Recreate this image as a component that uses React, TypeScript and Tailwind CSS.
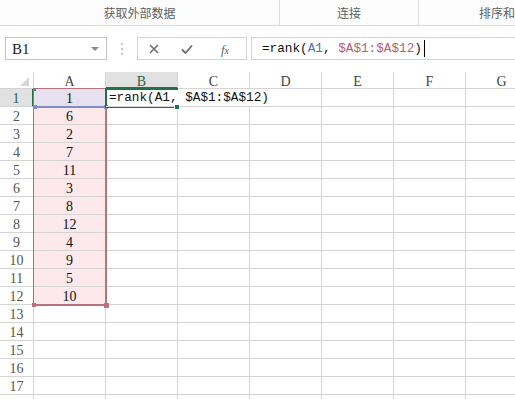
import React from 'react';

const mono = { fontFamily: '"Liberation Mono", "DejaVu Sans Mono", monospace' };
const serif = { fontFamily: '"Liberation Serif", "DejaVu Serif", serif' };
const cols = ['A', 'B', 'C', 'D', 'E', 'F', 'G'];
const values = [1, 6, 2, 7, 11, 3, 8, 12, 4, 9, 5, 10];
const rowCount = 18;

const FormulaText: React.FC<{ colored?: boolean }> = ({ colored }) => (
  <span className="whitespace-pre">
    =rank(
    <span className={colored ? 'text-[#4f6fa8]' : ''}>A1</span>
    {', '}
    <span className={colored ? 'text-[#b8606e]' : ''}>$A$1:$A$12</span>)
  </span>
);

const Ribbon: React.FC = () => (
  <div
    className="flex h-[26px] overflow-hidden border-b border-[#dadada] bg-[#fcfcfc] text-[12px] text-[#5f5f5f]"
    style={{ fontFamily: '"Noto Sans CJK SC", "Noto Sans", sans-serif' }}
  >
    <div className="flex w-[280px] shrink-0 items-center justify-center border-r border-[#e0e0e0]">获取外部数据</div>
    <div className="flex w-[139px] shrink-0 items-center justify-center border-r border-[#e0e0e0]">连接</div>
    <div className="flex min-w-0 flex-1 items-center overflow-hidden whitespace-nowrap pl-[60px]">排序和筛选</div>
  </div>
);

const FormulaBar: React.FC = () => (
  <div className="mt-[11px] flex h-[23px] items-stretch pl-[5px]">
    <div className="flex w-[102px] shrink-0 items-center justify-between border border-[#c6c6c6] bg-white pl-[6px] pr-[7px]">
      <span className="pt-[1px] text-[15px] text-[#222]" style={serif}>B1</span>
      <span className="h-0 w-0 border-x-[4px] border-t-[4px] border-x-transparent border-t-[#8a8a8a]" />
    </div>
    <div className="flex w-[30px] shrink-0 flex-col items-center justify-center gap-[3px]">
      <span className="h-[2px] w-[2px] bg-[#c8c8c8]" />
      <span className="h-[2px] w-[2px] bg-[#c8c8c8]" />
      <span className="h-[2px] w-[2px] bg-[#c8c8c8]" />
    </div>
    <div className="flex w-[110px] shrink-0 items-center border border-[#d4d4d4] bg-white">
      <div className="flex w-[30px] justify-center pl-[2px]">
        <svg width="10" height="10" viewBox="0 0 10 10">
          <path d="M1 1 L9 9 M9 1 L1 9" stroke="#6f6f6f" strokeWidth="1.6" />
        </svg>
      </div>
      <div className="flex w-[38px] justify-center">
        <svg width="12" height="10" viewBox="0 0 12 10">
          <path d="M1 5.5 L4.5 9 L11 1.5" stroke="#6f6f6f" strokeWidth="1.8" fill="none" />
        </svg>
      </div>
      <div className="flex w-[38px] justify-center">
        <span className="italic text-[#666]" style={serif}>
          <span className="text-[13px]">f</span>
          <span className="text-[10px]">x</span>
        </span>
      </div>
    </div>
    <div className="ml-[4px] flex min-w-0 flex-1 items-center border border-r-0 border-[#d4d4d4] bg-white pl-[10px]">
      <span className="text-[12.7px] text-[#111]" style={mono}>
        <FormulaText colored />
      </span>
      <span className="ml-[2px] h-[17px] w-px bg-black" />
    </div>
  </div>
);

const Sheet: React.FC = () => (
  <div className="relative mt-[12px] overflow-hidden">
    <div className="grid grid-cols-[34px_repeat(7,72px)] text-[14px]" style={serif}>
      {/* header row */}
      <div className="relative h-[17px] border-b border-r border-[#d4d4d4] bg-white">
        <svg className="absolute bottom-[2px] right-[4px]" width="9" height="9" viewBox="0 0 9 9">
          <path d="M9 0 L9 9 L0 9 Z" fill="#d6d6d6" />
        </svg>
      </div>
      {cols.map((c) =>
        c === 'B' ? (
          <div
            key={c}
            className="flex h-[17px] items-center justify-center border-b-2 border-r border-b-[#217346] border-r-[#d4d4d4] bg-[#e1e1e1] pt-[3px] text-[#2f5f44]"
          >
            {c}
          </div>
        ) : (
          <div
            key={c}
            className="flex h-[17px] items-center justify-center border-b border-r border-[#d4d4d4] bg-white pt-[3px] text-[#444]"
          >
            {c}
          </div>
        )
      )}

      {Array.from({ length: rowCount }, (_, i) => {
        const r = i + 1;
        const isFirst = r === 1;
        return (
          <React.Fragment key={r}>
            <div
              className={
                isFirst
                  ? 'flex h-[18px] items-center justify-center border-b border-r-2 border-b-[#d4d4d4] border-r-[#217346] bg-[#e1e1e1] pt-[2px] text-[#2f5f44]'
                  : 'flex h-[18px] items-center justify-center border-b border-r border-[#d4d4d4] bg-white pt-[2px] text-[#555]'
              }
            >
              {r < rowCount ? r : ''}
            </div>
            <div
              className={`flex h-[18px] items-center justify-center border-b border-r border-[#d4d4d4] pt-[2px] text-[#111] ${
                isFirst ? 'bg-[#e7e0ee]' : r <= 12 ? 'bg-[#fde8eb]' : 'bg-white'
              }`}
            >
              {r <= 12 ? values[i] : ''}
            </div>
            {isFirst ? (
              <div
                className="relative z-10 col-span-3 flex h-[18px] items-center border-b border-r border-[#d4d4d4] pl-[3px] pt-[1px] text-[12.7px] text-[#111]"
                style={mono}
              >
                <FormulaText />
              </div>
            ) : (
              <>
                <div className="h-[18px] border-b border-r border-[#d4d4d4] bg-white" />
                <div className="h-[18px] border-b border-r border-[#d4d4d4] bg-white" />
                <div className="h-[18px] border-b border-r border-[#d4d4d4] bg-white" />
              </>
            )}
            <div className="h-[18px] border-b border-r border-[#d4d4d4] bg-white" />
            <div className="h-[18px] border-b border-r border-[#d4d4d4] bg-white" />
            <div className="h-[18px] border-b border-r border-[#d4d4d4] bg-white" />
          </React.Fragment>
        );
      })}
    </div>

    {/* reference range $A$1:$A$12 */}
    <div className="pointer-events-none absolute left-[33px] top-[16px] h-[218px] w-[74px] border-b-2 border-l border-r-2 border-t border-b-[#b7727d] border-l-[#8c7b80] border-r-[#b7727d] border-t-[#b7727d]" />
    <div className="absolute left-[32px] top-[231px] h-[4px] w-[4px] bg-[#b7727d]" />
    <div className="absolute left-[104px] top-[231px] h-[5px] w-[5px] bg-[#b7727d]" />

    {/* reference A1 */}
    <div className="absolute left-[35px] top-[34px] h-[2px] w-[70px] bg-[#7c8fc6]" />
    <div className="absolute left-[33px] top-[33px] h-[4px] w-[4px] bg-[#7c8fc6]" />
    <div className="absolute left-[104px] top-[33px] h-[4px] w-[4px] bg-[#7c8fc6]" />
    <div className="absolute left-[33px] top-[16px] h-[3px] w-[3px] bg-[#7c7c7c]" />

    {/* active cell B1 */}
    <div className="pointer-events-none absolute left-[105px] top-[16px] h-[20px] w-[73px] border-2 border-r-0 border-[#217346]" />
    <div className="absolute left-[174px] top-[32px] z-20 h-[6px] w-[6px] border border-white bg-[#217346]" />
  </div>
);

export default function App() {
  return (
    <div className="h-[399px] w-[515px] overflow-hidden bg-white">
      <Ribbon />
      <FormulaBar />
      <Sheet />
    </div>
  );
}
